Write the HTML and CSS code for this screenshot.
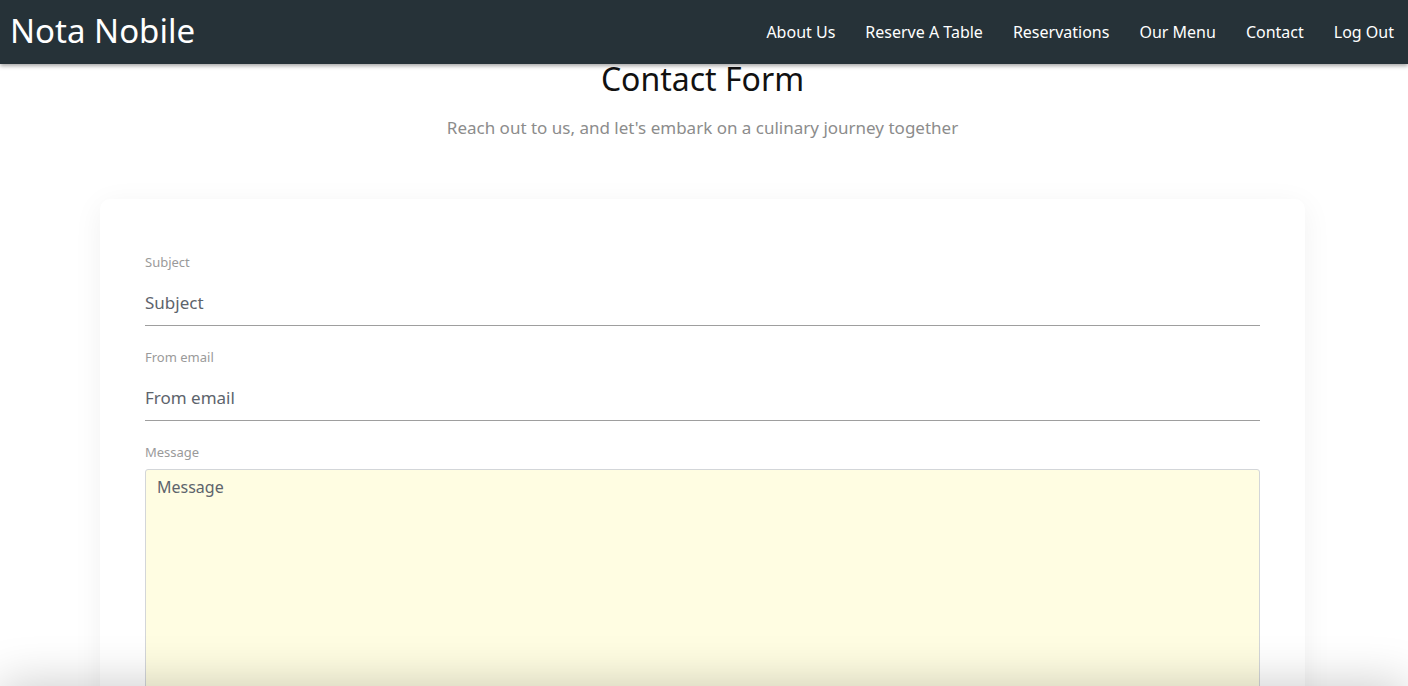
FILE: index.html
```html
<!DOCTYPE html>
<html lang="en">
<head>
<meta charset="utf-8">
<title>Nota Nobile - Contact</title>
<link rel="stylesheet" href="styles.css">
</head>
<body>
<header class="topbar">
  <a class="brand" href="#">Nota Nobile</a>
  <nav class="nav">
    <a class="nav-link" href="#">About Us</a>
    <a class="nav-link" href="#">Reserve A Table</a>
    <a class="nav-link" href="#">Reservations</a>
    <a class="nav-link" href="#">Our Menu</a>
    <a class="nav-link" href="#">Contact</a>
    <a class="nav-link" href="#">Log Out</a>
  </nav>
</header>
<main class="page">
  <h1 class="page-title">Contact Form</h1>
  <p class="page-subtitle">Reach out to us, and let's embark on a culinary journey together</p>
  <form class="card">
    <div class="field">
      <label class="field-label" for="subject">Subject</label>
      <input class="field-input" id="subject" type="text" placeholder="Subject">
    </div>
    <div class="field">
      <label class="field-label" for="from">From email</label>
      <input class="field-input" id="from" type="email" placeholder="From email">
    </div>
    <div class="field">
      <label class="field-label" for="message">Message</label>
      <textarea class="field-textarea" id="message" placeholder="Message"></textarea>
    </div>
  </form>
</main>
<div class="bottom-shade"></div>
</body>
</html>
```
FILE: styles.css
```css
* { box-sizing: border-box; }
html, body { margin: 0; padding: 0; }
body {
  font-family: "Noto Sans", "DejaVu Sans", sans-serif;
  background: #ffffff;
  color: #111;
  overflow: hidden;
}
.topbar {
  position: relative;
  z-index: 2;
  height: 64px;
  background: #263238;
  display: flex;
  align-items: center;
  justify-content: space-between;
  box-shadow: 0 2px 4px rgba(0,0,0,0.35);
}
.brand {
  color: #fff;
  text-decoration: none;
  font-size: 33px;
  line-height: 1;
  padding: 0 0 3px 10px;
}
.nav { display: flex; align-items: center; }
.nav-link {
  color: #fff;
  text-decoration: none;
  font-size: 16px;
  padding: 0 15px;
}
.nav-link:last-child { padding-right: 14px; }
.page {
  display: flex;
  flex-direction: column;
  align-items: center;
  padding-right: 3px;
}
.page-title {
  margin: 0;
  font-weight: 400;
  font-size: 32px;
  line-height: 29px;
  color: #111;
}
.page-subtitle {
  margin: 23px 0 0;
  font-size: 17px;
  line-height: 23px;
  color: #8c8c8c;
}
.card {
  align-self: flex-start;
  margin: 60px 0 0 100px;
  width: 1205px;
  height: 560px;
  background: #fff;
  border-radius: 10px;
  box-shadow: 0 6px 30px rgba(0,0,0,0.06);
  padding: 54px 45px 0;
}
.field { margin-bottom: 22px; }
.field-label {
  display: block;
  font-size: 13px;
  line-height: 18px;
  color: #9a9a9a;
  margin-bottom: 8px;
}
.field-input {
  display: block;
  width: 100%;
  border: 0;
  border-bottom: 1px solid #9e9e9e;
  background: transparent;
  font-family: inherit;
  font-size: 17px;
  line-height: 23px;
  padding: 12px 0 11px;
  color: #5d646c;
  outline: none;
}
.field-input::placeholder { color: #5d646c; opacity: 1; }
.field-textarea {
  display: block;
  width: 100%;
  height: 320px;
  margin-top: 4px;
  border: 1px solid #d3d6d9;
  border-radius: 3px;
  background: #fffde2;
  font-family: inherit;
  font-size: 16px;
  line-height: 22px;
  padding: 6px 11px;
  color: #5d646c;
  resize: none;
  outline: none;
}
.field-textarea::placeholder { color: #5d646c; opacity: 1; }
.bottom-shade {
  position: fixed;
  left: 0;
  right: 0;
  bottom: -60px;
  height: 60px;
  box-shadow: 0 0 50px rgba(0,0,0,0.22);
  z-index: 3;
}
```
